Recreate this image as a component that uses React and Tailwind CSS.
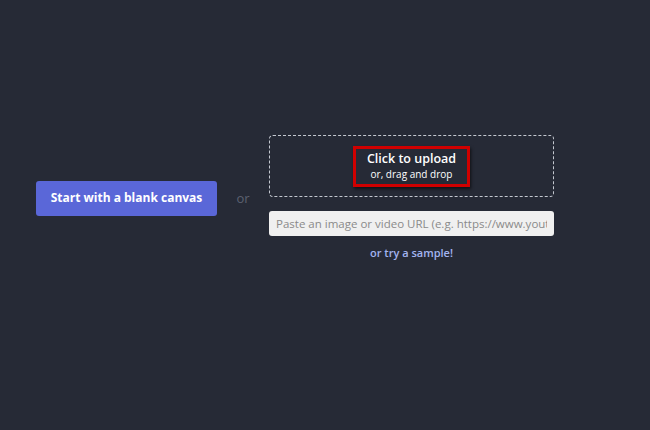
export default function App() {
  return (
    <div
      className="w-[650px] h-[430px] bg-[#262a36] overflow-hidden"
      style={{ fontFamily: '"Open Sans", "Liberation Sans", sans-serif' }}
    >
      <div className="flex items-center pt-[135px] pl-[36px]">
        <button className="w-[181px] h-[35px] rounded-[3px] bg-[#5a67d8] text-white text-[12px] font-bold">
          Start with a blank canvas
        </button>
        <span className="w-[52px] text-center text-[13px] text-[#5c6170]">or</span>
        <div className="w-[285px] flex flex-col items-center">
          <div className="w-full h-[62px] border border-dashed border-[#c4c8d0] rounded-[4px] flex items-center justify-center">
            <div className="w-[117px] h-[41px] border-[3px] border-[#d00000] shadow-[1px_2px_3px_rgba(0,0,0,0.6)] flex flex-col items-center justify-center leading-none">
              <span className="text-[12.5px] font-semibold text-white">Click to upload</span>
              <span className="text-[10px] text-white mt-[3px]">or, drag and drop</span>
            </div>
          </div>
          <input
            className="mt-[14px] w-full h-[25px] rounded-[3px] bg-[#f0f0f0] px-[7px] text-[11.5px] outline-none placeholder:text-[#8a8a8a]"
            placeholder="Paste an image or video URL (e.g. https://www.youtube.com/watch?v=...)"
          />
          <span className="mt-[9px] text-[11px] font-semibold text-[#a3b4f0]">or try a sample!</span>
        </div>
      </div>
    </div>
  )
}
